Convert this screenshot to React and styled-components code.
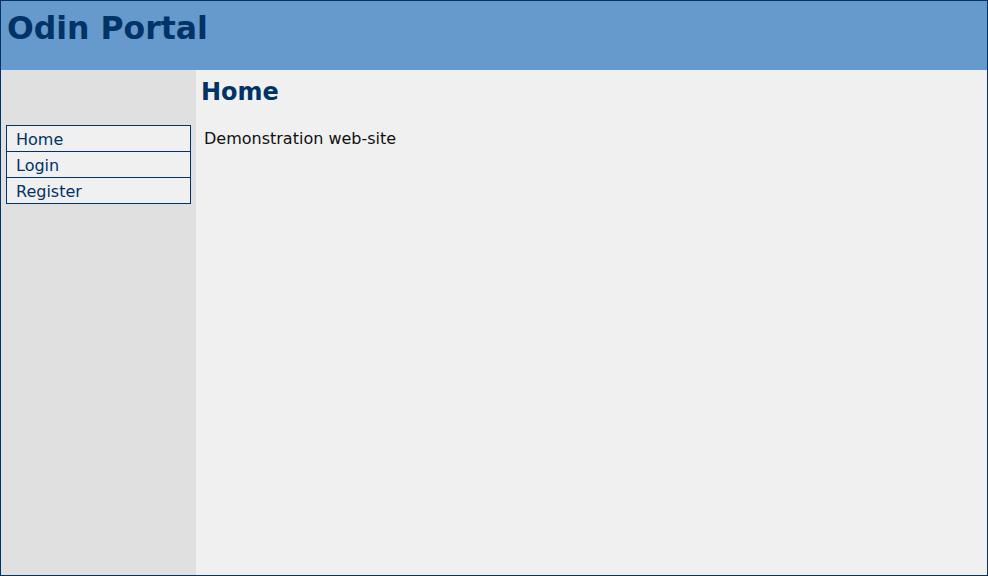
import React from "react";
import styled, { createGlobalStyle } from "styled-components";

const GlobalStyle = createGlobalStyle`
  html, body {
    margin: 0;
    padding: 0;
    height: 100%;
  }
  body {
    font-family: "DejaVu Sans", Verdana, sans-serif;
    background: #f0f0f0;
  }
  #root {
    height: 100%;
  }
`;

const Page = styled.div`
  box-sizing: border-box;
  height: 576px;
  border: 1px solid #003366;
  display: flex;
  flex-flow: column;
`;

const Header = styled.header`
  height: 69px;
  background-color: #6699cc;
  padding: 9px 6px 0 6px;
  box-sizing: border-box;
  h1 {
    margin: 0;
    font-size: 31.5px;
    font-weight: 700;
    color: #003366;
    line-height: 37px;
  }
`;

const Body = styled.div`
  flex: 1;
  display: flex;
`;

const Sidebar = styled.nav`
  width: 195px;
  background-color: #e0e0e0;
  padding: 55px 0 0 5px;
  box-sizing: border-box;
`;

const Menu = styled.ul`
  list-style: none;
  margin: 0;
  padding: 0;
  width: 183px;
  border: 1px solid #003366;
  border-top: none;
`;

const MenuItem = styled.li`
  border-top: 1px solid #003366;
  background-color: #f0f0f0;
  padding: 5px 9px 2px 9px;
  line-height: 18px;
  font-size: 16px;
  a {
    color: #003366;
    text-decoration: none;
  }
`;

const Main = styled.main`
  flex: 1;
  background-color: #f0f0f0;
  padding: 8px 8px 0 5px;
  h2 {
    margin: 0 0 23px 0;
    font-size: 24px;
    font-weight: 700;
    color: #003366;
    line-height: 28px;
  }
  p {
    margin: 0 0 0 3px;
    font-size: 16px;
    line-height: 19px;
    color: #111;
  }
`;

const links = ["Home", "Login", "Register"];

export default function App() {
  return (
    <>
      <GlobalStyle />
      <Page>
        <Header>
          <h1>Odin Portal</h1>
        </Header>
        <Body>
          <Sidebar>
            <Menu>
              {links.map((l) => (
                <MenuItem key={l}>
                  <a href="#">{l}</a>
                </MenuItem>
              ))}
            </Menu>
          </Sidebar>
          <Main>
            <h2>Home</h2>
            <p>Demonstration web-site</p>
          </Main>
        </Body>
      </Page>
    </>
  );
}
